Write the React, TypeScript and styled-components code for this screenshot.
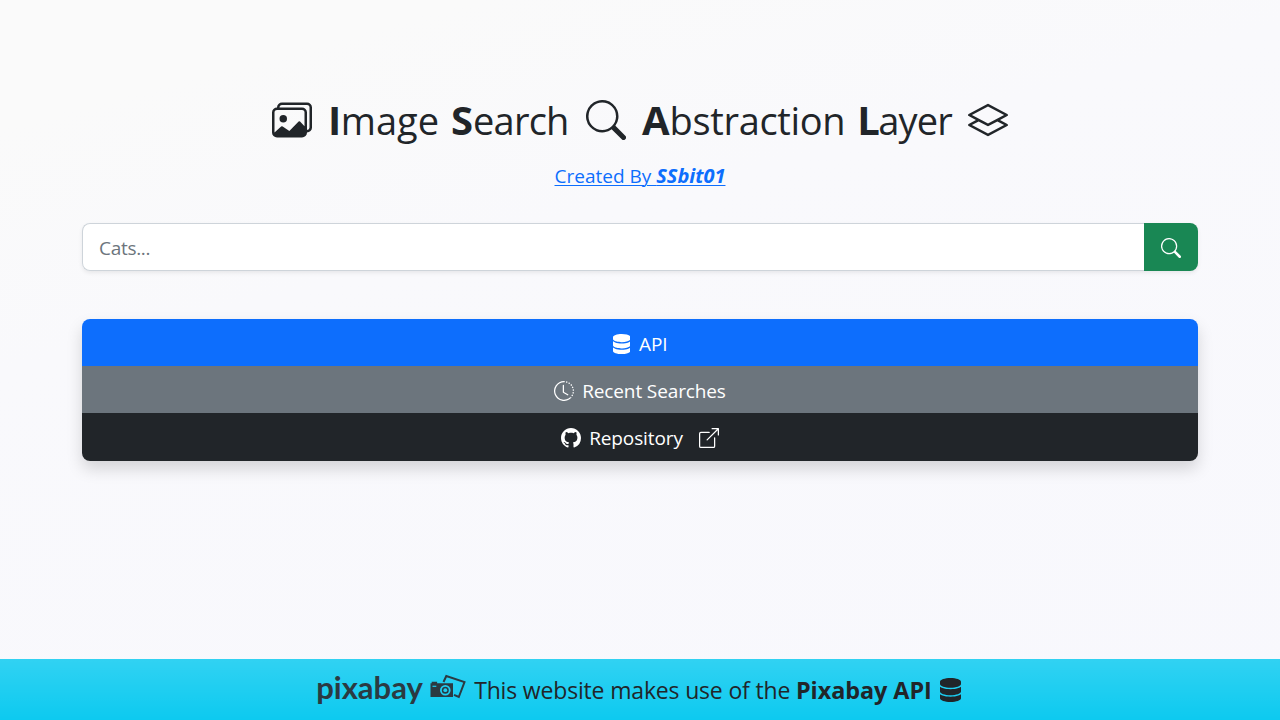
import React from 'react';
import styled, { createGlobalStyle } from 'styled-components';
import {
  BsImages,
  BsSearch,
  BsLayers,
  BsClockHistory,
  BsGithub,
  BsBoxArrowUpRight,
} from 'react-icons/bs';
import { FaDatabase } from 'react-icons/fa6';

const GlobalStyle = createGlobalStyle`
  *, *::before, *::after { box-sizing: border-box; }
  body {
    margin: 0;
    font-family: "Segoe UI", "Open Sans", "Noto Sans", sans-serif;
    color: #212529;
    background: #f9f9fb;
  }
`;

const Page = styled.div`
  height: 100vh;
  display: flex;
  flex-direction: column;
  overflow: hidden;
  background: linear-gradient(165deg, #fafafa 0%, #fafafa 12%, #f9f9fc 35%, #f8f8fd 100%);
`;

const Main = styled.main`
  flex: 1;
  width: 1116px;
  margin: 0 auto;
  padding-top: 96px;
  display: flex;
  flex-direction: column;
`;

const Title = styled.h1`
  margin: 0;
  height: 48px;
  display: flex;
  justify-content: center;
  align-items: center;
  gap: 16px;
  font-size: 38px;
  font-weight: 400;
  line-height: 48px;

  svg { width: 40px; height: 40px; flex: none; }
`;

const Phrase = styled.span<{ $width: number }>`
  width: ${({ $width }) => $width}px;
  display: flex;
  align-items: baseline;
  gap: 12px;
  white-space: nowrap;
`;

const Initial = styled.b<{ $kern?: number }>`
  font-size: 40px;
  font-weight: 700;
  margin-right: ${({ $kern = 0 }) => $kern}px;
`;

const Rest = styled.span<{ $track?: number }>`
  letter-spacing: ${({ $track = 0 }) => $track}px;
`;

const Author = styled.a`
  align-self: center;
  margin-top: 17px;
  height: 30px;
  line-height: 30px;
  font-size: 19px;
  color: #0d6efd;
  text-decoration: underline;
  text-decoration-thickness: 1px;
  text-underline-offset: 2px;

  strong { font-size: 20px; font-style: italic; }
`;

const SearchBar = styled.form`
  margin-top: 32px;
  display: flex;
  height: 48px;
  border-radius: 8px;
  box-shadow: 0 2px 4px rgba(0, 0, 0, 0.075);
`;

const SearchInput = styled.input`
  flex: 1;
  min-width: 0;
  padding: 9px 16px 7px;
  border: 1px solid #ced4da;
  border-right: 0;
  border-radius: 8px 0 0 8px;
  background: #fff;
  font: 19px/30px "Segoe UI", "Open Sans", "Noto Sans", sans-serif;
  letter-spacing: -0.3px;
  color: #212529;
  outline: none;

  &::placeholder { color: #6c757d; opacity: 1; }
`;

const SearchButton = styled.button`
  width: 54px;
  padding: 2px 0 0;
  border: 0;
  border-radius: 0 8px 8px 0;
  display: flex;
  align-items: center;
  justify-content: center;
  background: #198754;
  color: #fff;
  font-size: 20px;
`;

const Links = styled.nav`
  margin-top: 48px;
  display: flex;
  flex-direction: column;
  border-radius: 8px;
  overflow: hidden;
  flex: none;
  box-shadow: 0 8px 16px rgba(0, 0, 0, 0.15);
`;

const LinkRow = styled.a<{ $tone: string; $height?: number }>`
  height: ${({ $height = 47 }) => $height}px;
  padding-top: 2px;
  display: flex;
  align-items: center;
  justify-content: center;
  gap: 8px;
  background: ${({ $tone }) => $tone};
  color: #fff;
  font-size: 19px;
  line-height: 30px;
  letter-spacing: -0.12px;
  text-decoration: none;

  svg { flex: none; }
  span + svg { margin-left: 8px; }
`;

/* The cylinder glyph is 7/8 as wide as it is tall. */
const DatabaseIcon = styled(FaDatabase)<{ $size: number }>`
  width: ${({ $size }) => $size * 0.875}px;
  height: ${({ $size }) => $size}px;
  margin-right: 1px;
  flex: none;
`;

const Footer = styled.footer`
  height: 61px;
  padding-right: 2px;
  display: flex;
  align-items: center;
  justify-content: center;
  gap: 8px;
  background: linear-gradient(180deg, rgba(255, 255, 255, 0.15), rgba(255, 255, 255, 0)) #0dcaf0;
  font-size: 23px;
  line-height: 36px;
  letter-spacing: -0.17px;
  white-space: nowrap;

  b { font-size: 23.4px; letter-spacing: -0.05px; }
`;

const Brand = styled.a`
  width: 150px;
  height: 36px;
  margin-bottom: 3px;
  display: flex;
  align-items: center;
  gap: 8px;
  color: #2b3a42;
`;

const BrandName = styled.span`
  width: 106px;
  margin-top: -2px;
  font-family: Lato, sans-serif;
  font-size: 31px;
  font-weight: 700;
  letter-spacing: 0;
`;

const Camera = () => (
  <svg width="36" height="28" viewBox="0 0 36 28" fill="none">
    <path d="M13.5 8 16.3 2 34.5 8.1 28.8 23 24 20.8" stroke="currentColor" strokeWidth="2" />
    <path d="M.5 9.3h1.2V7.8h5.4v1.5H23V23H.5z" fill="currentColor" />
    <circle cx="15.3" cy="16.2" r="4.4" fill="currentColor" stroke="#1fcdf1" strokeWidth="1.8" />
    <circle cx="15.3" cy="16.2" r="1.9" fill="#1fcdf1" />
    <path d="M2.5 12.3h3.8" stroke="#1fcdf1" strokeWidth="1.2" />
  </svg>
);

export default function App() {
  return (
    <Page>
      <GlobalStyle />
      <Main>
        <Title>
          <BsImages />
          <Phrase $width={242}>
            <span><Initial $kern={-0.5}>I</Initial><Rest>mage</Rest></span>
            <span><Initial>S</Initial><Rest $track={-0.8}>earch</Rest></span>
          </Phrase>
          <BsSearch />
          <Phrase $width={310}>
            <span><Initial>A</Initial><Rest $track={-0.35}>bstraction</Rest></span>
            <span><Initial $kern={-1.5}>L</Initial><Rest $track={-0.8}>ayer</Rest></span>
          </Phrase>
          <BsLayers />
        </Title>
        <Author>Created By <strong>SSbit01</strong></Author>
        <SearchBar>
          <SearchInput type="search" placeholder="Cats..." />
          <SearchButton type="button" aria-label="Search"><BsSearch /></SearchButton>
        </SearchBar>
        <Links>
          <LinkRow $tone="#0d6efd"><DatabaseIcon $size={20} /><span>API</span></LinkRow>
          <LinkRow $tone="#6c757d"><BsClockHistory size={20} /><span>Recent Searches</span></LinkRow>
          <LinkRow $tone="#212529" $height={48}>
            <BsGithub size={20} /><span>Repository</span><BsBoxArrowUpRight size={20} />
          </LinkRow>
        </Links>
      </Main>
      <Footer>
        <Brand aria-label="Pixabay"><BrandName>pixabay</BrandName><Camera /></Brand>
        <span>This website makes use of the <b>Pixabay API</b></span>
        <DatabaseIcon $size={24} />
      </Footer>
    </Page>
  );
}
